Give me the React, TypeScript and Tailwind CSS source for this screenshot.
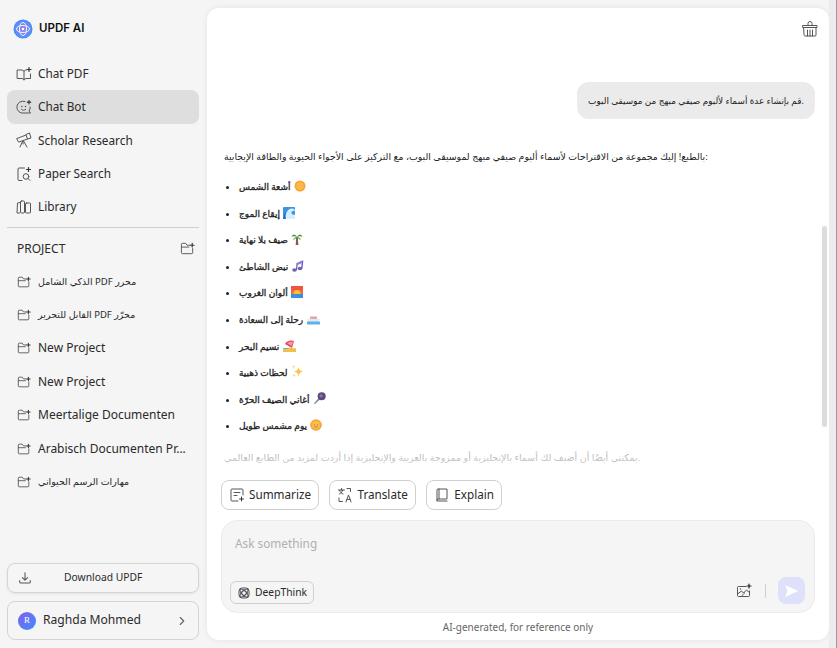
import { ReactNode } from 'react';
import { ChevronRight } from 'lucide-react';

const Ico = ({ size = 16, children }: { size?: number; children: ReactNode }) => (
  <svg width={size} height={size} viewBox="0 0 16 16" fill="none" stroke="#555" strokeWidth="1" strokeLinecap="round" strokeLinejoin="round" className="shrink-0">
    {children}
  </svg>
);

const BookPlus = () => (
  <Ico>
    <path d="M1.500 4h3.500c1.500 0 3 .5 3 1.500V14c0-1-1.500-1.500-3-1.500H1.500z" />
    <path d="M8 5.500C8 4.500 9 4 10.500 4M14.500 8v4.500H11c-1.500 0-3 .5-3 1.500" />
    <path d="M13 1.500v4M11 3.500h4" stroke="#333" strokeWidth="1.200" />
  </Ico>
);
const BotChat = () => (
  <Ico>
    <path d="M9 2.500a6 6 0 1 0-1 11.500h6.500l-1.500-2a6 6 0 0 0 1.200-4" />
    <circle cx="5.800" cy="7.500" r=".8" fill="#555" stroke="none" />
    <circle cx="9.500" cy="7.500" r=".8" fill="#555" stroke="none" />
    <path d="M5.500 10.500c1.200 1 3 1 4.200 0" />
    <path d="M13 1.500v3.500M11.300 3.200h3.400" stroke="#333" strokeWidth="1.200" />
  </Ico>
);
const Telescope = () => (
  <Ico>
    <path d="M1 6.500l9-3.500 1.500 4-8.500 3z" />
    <path d="M10 2.500l3.500-1.500 1.500 5-3.500 1" />
    <path d="M6.500 9.500L4 15M7.500 9l3.500 6M7 9.500V12" />
  </Ico>
);
const PaperSearch = () => (
  <Ico>
    <path d="M8.500 2H3a1 1 0 0 0-1 1v10.500a1 1 0 0 0 1 1h3" />
    <circle cx="10" cy="10.500" r="2.800" />
    <path d="M12 12.500l2 2" />
    <path d="M12.500 1.500v4M10.500 3.500h4" stroke="#333" strokeWidth="1.200" />
  </Ico>
);
const Library = () => (
  <Ico>
    <path d="M4 3.500l-2.500.5L1 14h2.500" />
    <rect x="4.500" y="2" width="4" height="12" rx="1" />
    <rect x="9.500" y="4" width="5" height="10" rx="1" />
  </Ico>
);
const FolderPlus = ({ size = 14 }: { size?: number }) => (
  <Ico size={size}>
    <path d="M13.500 8v4.500a1 1 0 0 1-1 1h-10a1 1 0 0 1-1-1v-9a1 1 0 0 1 1-1h3.500l1.500 2h3" />
    <path d="M1.500 6.500h8" />
    <path d="M13 2.500v4M11 4.500h4" stroke="#333" strokeWidth="1.200" />
  </Ico>
);

const Logo = () => (
  <svg width="20" height="20" viewBox="0 0 20 20" className="shrink-0">
    <defs>
      <radialGradient id="lg" cx="50%" cy="50%" r="55%">
        <stop offset="0%" stopColor="#8f7cf0" />
        <stop offset="65%" stopColor="#6a8cf5" />
        <stop offset="100%" stopColor="#2f8dfa" />
      </radialGradient>
    </defs>
    <circle cx="10" cy="10" r="9.500" fill="url(#lg)" />
    <g fill="none" stroke="#fff" strokeWidth=".9">
      <ellipse cx="10" cy="10" rx="6.500" ry="3.500" />
      <ellipse cx="10" cy="10" rx="3.500" ry="6.500" />
    </g>
    <circle cx="10" cy="10" r="1.300" fill="#fff" />
  </svg>
);

const Sun = () => (
  <svg width="12" height="12" viewBox="0 0 12 12" className="ml-px inline-block align-[-2px]">
    <circle cx="6" cy="6" r="5.500" fill="#f7a43a" />
    <circle cx="6" cy="6" r="3.800" fill="#fbb946" />
  </svg>
);
const Wave = () => (
  <svg width="12" height="12" viewBox="0 0 12 12" className="ml-px inline-block align-[-2px]">
    <rect width="12" height="12" rx="1" fill="#3a95e8" />
    <path d="M2 12C2 6 5 1.500 9 1.500c2 0 3 1 3 3-1-1.500-3.500-1-3.500 1.500 0 1.500 1.500 2 3.500 1.500V12z" fill="#d7eefb" />
    <path d="M0 12c1-4 2-7 4-8.500C2.500 6 2 9 3 12z" fill="#1c6dc4" />
  </svg>
);
const Palm = () => (
  <svg width="12" height="13" viewBox="0 0 12 13" className="ml-px inline-block align-[-2px]">
    <path d="M5.200 5h1.600l.5 8H4.700z" fill="#8a5a52" />
    <path d="M6 5C4 1.500 1.500 2 .5 5 2 3.800 4 4 6 5zM6 5c2-3.500 4.500-3 5.500 0C10 3.800 8 4 6 5zM6 5C4.500 5 2.500 6 2 8.500 3.500 7 5 6.500 6 5zM6 5c1.500 0 3.500 1 4 3.500C8.500 7 7 6.500 6 5z" fill="#4f9a3f" />
  </svg>
);
const Notes = () => (
  <svg width="12" height="12" viewBox="0 0 12 12" className="ml-px inline-block align-[-2px]">
    <g fill="#6f61b8">
      <ellipse cx="2.500" cy="10" rx="2.300" ry="1.800" />
      <ellipse cx="8" cy="8.500" rx="2.300" ry="1.800" />
      <path d="M3.800 10l.8-7 1.300.1L5.100 10zM9 8.500l1-8 1.400.2-1 8z" />
      <path d="M4.600 3L10 .5l.3 2.500-5.800 2.500z" fill="#8d80d4" />
    </g>
  </svg>
);
const Sunset = () => (
  <svg width="12" height="12" viewBox="0 0 12 12" className="ml-px inline-block align-[-2px]">
    <rect width="12" height="12" fill="#ef6a4c" />
    <rect width="12" height="4" fill="#f0563f" />
    <circle cx="6" cy="7.500" r="3.500" fill="#fbc02d" />
    <rect y="8" width="12" height="4" fill="#3b8fe0" />
  </svg>
);
const Ship = () => (
  <svg width="13" height="12" viewBox="0 0 13 12" className="ml-px inline-block align-[-2px]">
    <rect x="3" y="3.500" width="7" height="2.500" fill="#e9a3a3" />
    <path d="M0 6h13l-1.500 3h-10z" fill="#dfeaf5" />
    <rect y="8.500" width="13" height="3" fill="#5db1ea" />
  </svg>
);
const Surf = () => (
  <svg width="13" height="12" viewBox="0 0 13 12" className="ml-px inline-block align-[-2px]">
    <path d="M2 4C3 1 8-.5 11 1L9 8z" fill="#e8465a" />
    <path d="M4 3c2-1 4-1.500 6-1L8.500 6z" fill="#f49aa5" />
    <path d="M0 9.500c3-2 8-2 13-1V12H0z" fill="#f1c04a" />
    <path d="M0 8.500C2 7.500 4 8 5 9H0z" fill="#4aa3df" />
  </svg>
);
const Sparkle = () => (
  <svg width="13" height="13" viewBox="0 0 12 12" className="ml-px inline-block align-[-2px]">
    <path d="M7 1.500c.4 2.800 1.500 4 5 4.500-3.500.4-4.600 1.700-5 5-.4-3.300-1.500-4.600-5-5 3.500-.5 4.600-1.700 5-4.500z" fill="#f9c349" />
    <path d="M2.500 0c.2 1 .7 1.500 1.700 1.700-1 .2-1.500.7-1.700 1.700C2.300 2.400 1.800 1.900.8 1.700 1.800 1.500 2.300 1 2.500 0zM2.800 8c.2 1 .6 1.500 1.600 1.700-1 .2-1.400.7-1.600 1.800-.2-1.100-.6-1.600-1.700-1.800 1.100-.2 1.500-.7 1.700-1.700z" fill="#fbd67f" />
  </svg>
);
const Mic = () => (
  <svg width="13" height="13" viewBox="0 0 12 12" className="ml-px inline-block align-[-2px]">
    <path d="M6 4.500L.8 10.500l.8.800L7.500 6z" fill="#8d8d96" />
    <circle cx="8" cy="4" r="3.700" fill="#5b4a78" />
    <circle cx="7.500" cy="3.500" r="1.500" fill="#8a75ad" />
  </svg>
);
const SunFace = () => (
  <svg width="12" height="12" viewBox="0 0 12 12" className="ml-px inline-block align-[-2px]">
    <circle cx="6" cy="6" r="5.800" fill="#f5a33a" />
    <circle cx="6" cy="6" r="3.900" fill="#fbc04a" />
    <path d="M3.800 5.500l1 .5M8.200 5.500l-1 .5M4.500 7.500c1 .8 2 .8 3 0" stroke="#8a5a20" strokeWidth=".7" fill="none" />
  </svg>
);

const nav = [
  { label: 'Chat PDF', icon: <BookPlus /> },
  { label: 'Chat Bot', icon: <BotChat />, active: true },
  { label: 'Scholar Research', icon: <Telescope /> },
  { label: 'Paper Search', icon: <PaperSearch /> },
  { label: 'Library', icon: <Library /> },
];

const projects = [
  { label: 'الذكي الشامل PDF محرر', ar: true },
  { label: 'القابل للتحرير PDF محرّر', ar: true },
  { label: 'New Project' },
  { label: 'New Project' },
  { label: 'Meertalige Documenten' },
  { label: 'Arabisch Documenten Pr...' },
  { label: 'مهارات الرسم الحيواني', ar: true },
];

const albums = [
  { name: 'أشعة الشمس', emoji: <Sun /> },
  { name: 'إيقاع الموج', emoji: <Wave /> },
  { name: 'صيف بلا نهاية', emoji: <Palm /> },
  { name: 'نبض الشاطئ', emoji: <Notes /> },
  { name: 'ألوان الغروب', emoji: <Sunset /> },
  { name: 'رحلة إلى السعادة', emoji: <Ship /> },
  { name: 'نسيم البحر', emoji: <Surf /> },
  { name: 'لحظات ذهبية', emoji: <Sparkle /> },
  { name: 'أغاني الصيف الحرّة', emoji: <Mic /> },
  { name: 'يوم مشمس طويل', emoji: <SunFace /> },
];

const Action = ({ icon, label }: { icon: ReactNode; label: string }) => (
  <button className="flex h-[30px] items-center gap-[4px] rounded-lg border border-[#cfcfcf] bg-white px-[7px] text-[11.700px] text-[#2a2a2a]">
    {icon}
    {label}
  </button>
);

const App = () => {
  return (
    <div className="flex h-[648px] w-[837px] overflow-hidden bg-[#f5f5f5] font-['Noto_Sans','DejaVu_Sans',sans-serif] text-[#2a2a2a]">
      <aside className="flex w-[207px] shrink-0 flex-col pb-2 pl-[7px] pr-2">
        <div className="flex h-[57px] items-center gap-[6px] pl-[6px]">
          <Logo />
          <span className="font-['Inter'] text-[11.500px] font-semibold text-[#111]">UPDF AI</span>
        </div>
        <nav>
          {nav.map((item) => (
            <div
              key={item.label}
              className={`flex h-[33.4px] items-center gap-[6px] rounded-lg pl-[9px] text-[11.800px] ${item.active ? 'bg-[#dedede]' : ''}`}
            >
              {item.icon}
              <span>{item.label}</span>
            </div>
          ))}
        </nav>
        <div className="mt-[3px] border-t border-[#cfcfcf]" />
        <div className="flex h-[37px] items-center justify-between pl-[10px] pr-[4px] pt-[5px] text-[12px]">
          <span>PROJECT</span>
          <FolderPlus size={15} />
        </div>
        <div>
          {projects.map((p, i) => (
            <div key={i} className="flex h-[33.4px] items-center gap-[7px] pl-[10px]">
              <FolderPlus />
              <span className={p.ar ? 'text-[9.500px]' : 'text-[12px]'}>{p.label}</span>
            </div>
          ))}
        </div>
        <div className="mt-auto flex h-[30px] items-center rounded-lg border border-[#d4d4d4] pl-[10px] text-[10.300px] shadow-[0_1px_3px_rgba(0,0,0,0.08)]">
          <svg width="14" height="14" viewBox="0 0 16 16" fill="none" stroke="#555" strokeWidth="1.200" strokeLinecap="round" strokeLinejoin="round">
            <path d="M8 2v8M5 7.500l3 3 3-3M2 11v1.500c0 .8.500 1.300 1.300 1.300h9.400c.8 0 1.300-.5 1.300-1.300V11" />
          </svg>
          <span className="ml-[32px]">Download UPDF</span>
        </div>
        <div className="mt-[8px] flex h-[39px] items-center rounded-lg border border-[#d4d4d4] pl-[10px] pr-[9px]">
          <div className="flex h-[18px] w-[18px] items-center justify-center rounded-full bg-gradient-to-br from-[#7c5cf0] to-[#2f8dfa] font-['Liberation_Serif',serif] text-[9px] text-white">R</div>
          <span className="ml-[7px] text-[12.100px]">Raghda Mohmed</span>
          <ChevronRight size={14} className="ml-auto text-[#666]" />
        </div>
      </aside>

      <main className="my-2 flex h-[632px] w-[622px] shrink-0 flex-col rounded-xl bg-white shadow-[0_0_6px_rgba(0,0,0,0.08)]">
        <div className="flex h-[42px] shrink-0 justify-end pr-[11px] pt-[13px]">
          <svg width="16" height="16" viewBox="0 0 16 16" fill="none" stroke="#555" strokeWidth="1" strokeLinejoin="round" strokeLinecap="round">
            <path d="M2 6.500h12v7.500a1 1 0 0 1-1 1H3a1 1 0 0 1-1-1zM1 4.500h14v2H1zM6 4.500V2.500a2 2 0 0 1 4 0v2M5.500 9v6M8 9v6M10.500 9v6" />
          </svg>
        </div>
        <div className="relative min-h-0 flex-1 overflow-hidden">
          <div className="flex justify-end pr-[14px] pt-[32px]">
            <div className="flex h-[37px] w-[238px] items-center justify-center whitespace-nowrap rounded-xl bg-[#ebebeb] text-[8.900px] text-[#222]">
              قم بإنشاء عدة أسماء لألبوم صيفي مبهج من موسيقى البوب.
            </div>
          </div>
          <p className="ml-[17px] mt-[31px] text-[9.400px] leading-[14px] text-[#222]">
            بالطبع! إليك مجموعة من الاقتراحات لأسماء ألبوم صيفي مبهج لموسيقى البوب، مع التركيز على الأجواء الحيوية والطاقة الإيجابية:
          </p>
          <ul className="ml-[32px] mt-[10px] list-disc text-[9px] text-[#222] [-webkit-text-stroke:0.3px_#222]">
            {albums.map((a) => (
              <li key={a.name} className="h-[26.6px] leading-[26px]">
                {a.name} {a.emoji}
              </li>
            ))}
          </ul>
          <p className="ml-[17px] mt-[11px] text-[9.500px] leading-[14px] text-[#222]">
            يمكنني أيضًا أن أضيف لك أسماء بالإنجليزية أو ممزوجة بالعربية والإنجليزية إذا أردت لمزيد من الطابع العالمي.
          </p>
          <div className="absolute inset-x-0 bottom-0 h-[44px] bg-gradient-to-t from-white to-white/40" />
          <div className="absolute right-[2px] top-[176px] h-[201px] w-[5px] rounded bg-[#dcdcdc]" />
        </div>
        <div className="flex shrink-0 gap-[10.500px] px-[14px] pb-[10px]">
          <Action
            label="Summarize"
            icon={
              <Ico>
                <path d="M14 8V3a1 1 0 0 0-1-1H3a1 1 0 0 0-1 1v10a1 1 0 0 0 1 1h6" />
                <path d="M5 5.500h6M5 8.500h3" />
                <path d="M12.500 10v4M10.500 12h4" stroke="#333" />
              </Ico>
            }
          />
          <Action
            label="Translate"
            icon={
              <Ico>
                <path d="M1.500 3h6M4.500 1.500V3M2.500 7c1.500-.8 2.500-2 3.200-4M2.500 3.500c.6 1.500 2 3 3.500 3.500" />
                <path d="M10 1.500h3.500v3M5.500 14.500H2V11" />
                <path d="M9 15l2.500-7 2.500 7M10 12.500h3" />
              </Ico>
            }
          />
          <Action
            label="Explain"
            icon={
              <Ico>
                <path d="M3 14V3a1 1 0 0 1 1-1h9v10H4a1 1 0 0 0-1 1 1 1 0 0 0 1 1h9" />
                <path d="M5 2v10" />
              </Ico>
            }
          />
        </div>
        <div className="mx-[14px] flex h-[93px] shrink-0 flex-col rounded-2xl border border-[#ebebeb] bg-[#f5f5f5] pb-[8px] pl-[8px] pr-[9px]">
          <div className="pl-[5px] pt-[14px] text-[11.800px] text-[#b0b0b0]">Ask something</div>
          <div className="mt-auto flex items-end justify-between">
            <button className="flex h-[23px] items-center gap-[5px] rounded-md border border-[#d0d0d0] bg-[#f5f5f5] pl-[7px] pr-[6px] text-[10.300px]">
              <svg width="12" height="12" viewBox="0 0 12 12" fill="none" stroke="#555" strokeWidth="1">
                <ellipse cx="6" cy="6" rx="5" ry="2.200" transform="rotate(45 6 6)" />
                <ellipse cx="6" cy="6" rx="5" ry="2.200" transform="rotate(-45 6 6)" />
                <circle cx="6" cy="6" r="2.400" />
                <rect x="1" y="1" width="10" height="10" rx="3" />
              </svg>
              DeepThink
            </button>
            <div className="flex items-center">
              <Ico>
                <path d="M13.500 8v4.500a1 1 0 0 1-1 1h-10a1 1 0 0 1-1-1v-8a1 1 0 0 1 1-1H10" />
                <path d="M1.500 11l4-3 2 2 3-3 3 2.500M6 13.500c.3-1.500 1.500-3 2.500-3.500" />
                <circle cx="4.500" cy="6" r=".7" fill="#555" stroke="none" />
                <path d="M13 1v4M11 3h4" stroke="#222" strokeWidth="1.200" />
              </Ico>
              <div className="ml-[13px] mr-[12px] h-[14px] w-px bg-[#cfcfcf]" />
              <div className="flex h-[27px] w-[27px] items-center justify-center rounded-lg bg-[#dfe0fa]">
                <svg width="13" height="12" viewBox="0 0 13 12">
                  <path d="M0 0l13 6-13 6 2.500-6z" fill="#fff" />
                </svg>
              </div>
            </div>
          </div>
        </div>
        <div className="flex h-[27px] shrink-0 items-center justify-center pt-[1px] text-[10px] text-[#666]">
          AI-generated, for reference only
        </div>
      </main>
      <div className="w-[7px] shrink-0 bg-[#ececec]" />
      <div className="w-px shrink-0 bg-[#999]" />
    </div>
  );
};

export default App;
